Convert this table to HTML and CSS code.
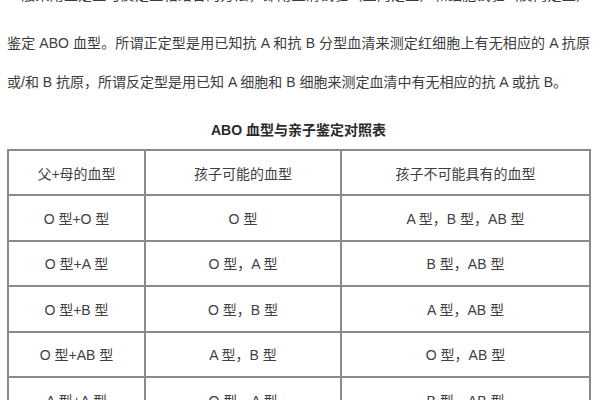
FILE: index.html
```html
<!DOCTYPE html>
<html lang="zh">
<head>
<meta charset="utf-8">
<title>ABO 血型与亲子鉴定对照表</title>
<link rel="stylesheet" href="styles.css">
</head>
<body>
<div class="page">
  <div class="line cut full">一般采用正定型与反定型相结合的方法，即用血清试验（正向定型）和细胞试验（反向定型）来</div>
  <div class="para">
    <div class="line full">鉴定 ABO 血型。所谓正定型是用已知抗 A 和抗 B 分型血清来测定红细胞上有无相应的 A 抗原</div>
    <div class="line">或/和 B 抗原，所谓反定型是用已知 A 细胞和 B 细胞来测定血清中有无相应的抗 A 或抗 B。</div>
  </div>
  <h1 class="title">ABO 血型与亲子鉴定对照表</h1>
  <table class="grid">
    <colgroup>
      <col class="c1"><col class="c2"><col class="c3">
    </colgroup>
    <tr><td>父+母的血型</td><td>孩子可能的血型</td><td>孩子不可能具有的血型</td></tr>
    <tr><td>O 型+O 型</td><td>O 型</td><td>A 型，B 型，AB 型</td></tr>
    <tr><td>O 型+A 型</td><td>O 型，A 型</td><td>B 型，AB 型</td></tr>
    <tr><td>O 型+B 型</td><td>O 型，B 型</td><td>A 型，AB 型</td></tr>
    <tr><td>O 型+AB 型</td><td>A 型，B 型</td><td>O 型，AB 型</td></tr>
    <tr><td>A 型+A 型</td><td>O 型，A 型</td><td>B 型，AB 型</td></tr>
  </table>
</div>
</body>
</html>
```

FILE: styles.css
```css
html, body {
  margin: 0;
  padding: 0;
  background: #ffffff;
  overflow: hidden;
}
body {
  font-family: "Liberation Sans", "Noto Sans CJK SC", sans-serif;
  font-size: 14px;
  color: #3c3c3c;
}
.page {
  width: 583px;
  padding: 0 0 0 7px;
  display: flow-root;
}
.line {
  white-space: nowrap;
  line-height: 39px;
}
.line.full {
  white-space: normal;
  text-align: justify;
  text-align-last: justify;
  height: 39px;
  overflow: hidden;
}
.cut {
  margin-top: -24px;
}
.para {
  margin-top: 9px;
}
.title {
  margin: 19px 0 0 0;
  font-size: 14px;
  font-weight: bold;
  line-height: 18px;
  text-align: center;
  color: #2a2a2a;
}
.grid {
  margin-top: 10px;
  width: 582px;
  border-collapse: collapse;
  table-layout: fixed;
}
.c1 { width: 137px; }
.c2 { width: 196px; }
.c3 { width: 249px; }
.grid td {
  border: 2px solid #8a8a8a;
  height: 43.4px;
  padding: 0;
  text-align: center;
  vertical-align: middle;
  color: #404040;
}
```
